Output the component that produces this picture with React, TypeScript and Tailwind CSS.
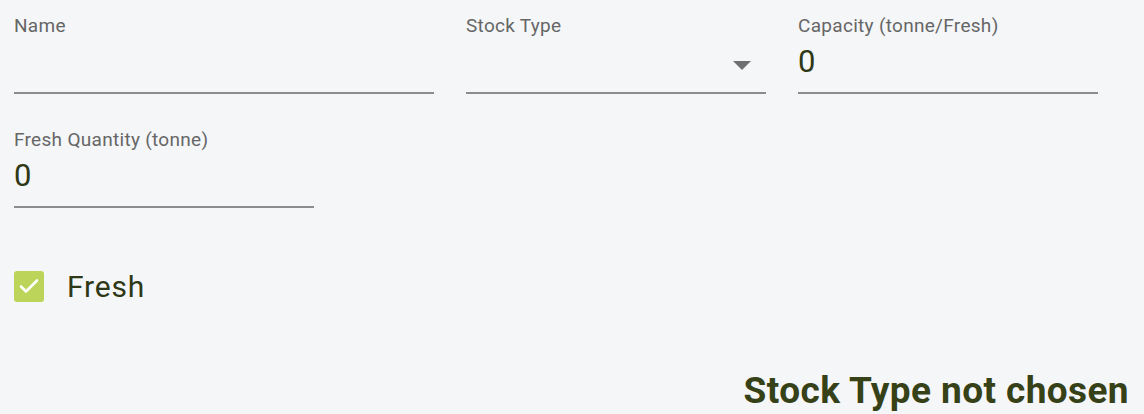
type FieldProps = {
  label: string;
  value?: string;
  width: string;
  select?: boolean;
};

function Field({ label, value, width, select }: FieldProps) {
  return (
    <div className={`${width} flex flex-col`}>
      <div className="h-[23px] pt-[1px] text-[19px] leading-[22px] tracking-[0.3px] text-[#666666]">{label}</div>
      <div className="relative mt-[7px] h-[36px] text-[31px] leading-[36px] text-[#2f3816]">
        {value}
        {select && (
          <svg
            className="absolute right-[14px] top-[17px]"
            width="20"
            height="10"
            viewBox="0 0 20 10"
          >
            <path d="M1 0h18l-9 9z" fill="#707070" />
          </svg>
        )}
      </div>
      <div className="mt-[12px] border-b-2 border-[#8c8c8c]" />
    </div>
  );
}

export default function App() {
  return (
    <div
      className="h-[414px] w-[1144px] overflow-hidden bg-[#f5f6f8] pl-[14px] pr-[15px] pt-[14px]"
      style={{ fontFamily: 'Roboto, "Liberation Sans", sans-serif' }}
    >
      <div className="flex gap-[32px]">
        <Field label="Name" width="w-[420px]" />
        <Field label="Stock Type" width="w-[300px]" select />
        <Field label="Capacity (tonne/Fresh)" value="0" width="w-[300px]" />
      </div>

      <div className="mt-[34px] flex">
        <Field label="Fresh Quantity (tonne)" value="0" width="w-[300px]" />
      </div>

      <label className="mt-[61px] flex items-center gap-[23px]">
        <span className="flex h-[31px] w-[30px] items-center justify-center rounded-[3px] bg-[#bcd45a]">
          <svg width="20" height="16" viewBox="0 0 20 16" fill="none">
            <path d="M2 8.5l5 5L18 2.5" stroke="#ffffff" strokeWidth="2.6" strokeLinecap="round" strokeLinejoin="round" />
          </svg>
        </span>
        <span className="pt-[2px] text-[30px] leading-[32px] tracking-[0.8px] text-[#2f3816]">Fresh</span>
      </label>

      <div className="mt-[68px] flex justify-end">
        <span className="text-[37px] font-bold leading-[40px] tracking-[0.4px] text-[#364118]">Stock Type not chosen</span>
      </div>
    </div>
  );
}
